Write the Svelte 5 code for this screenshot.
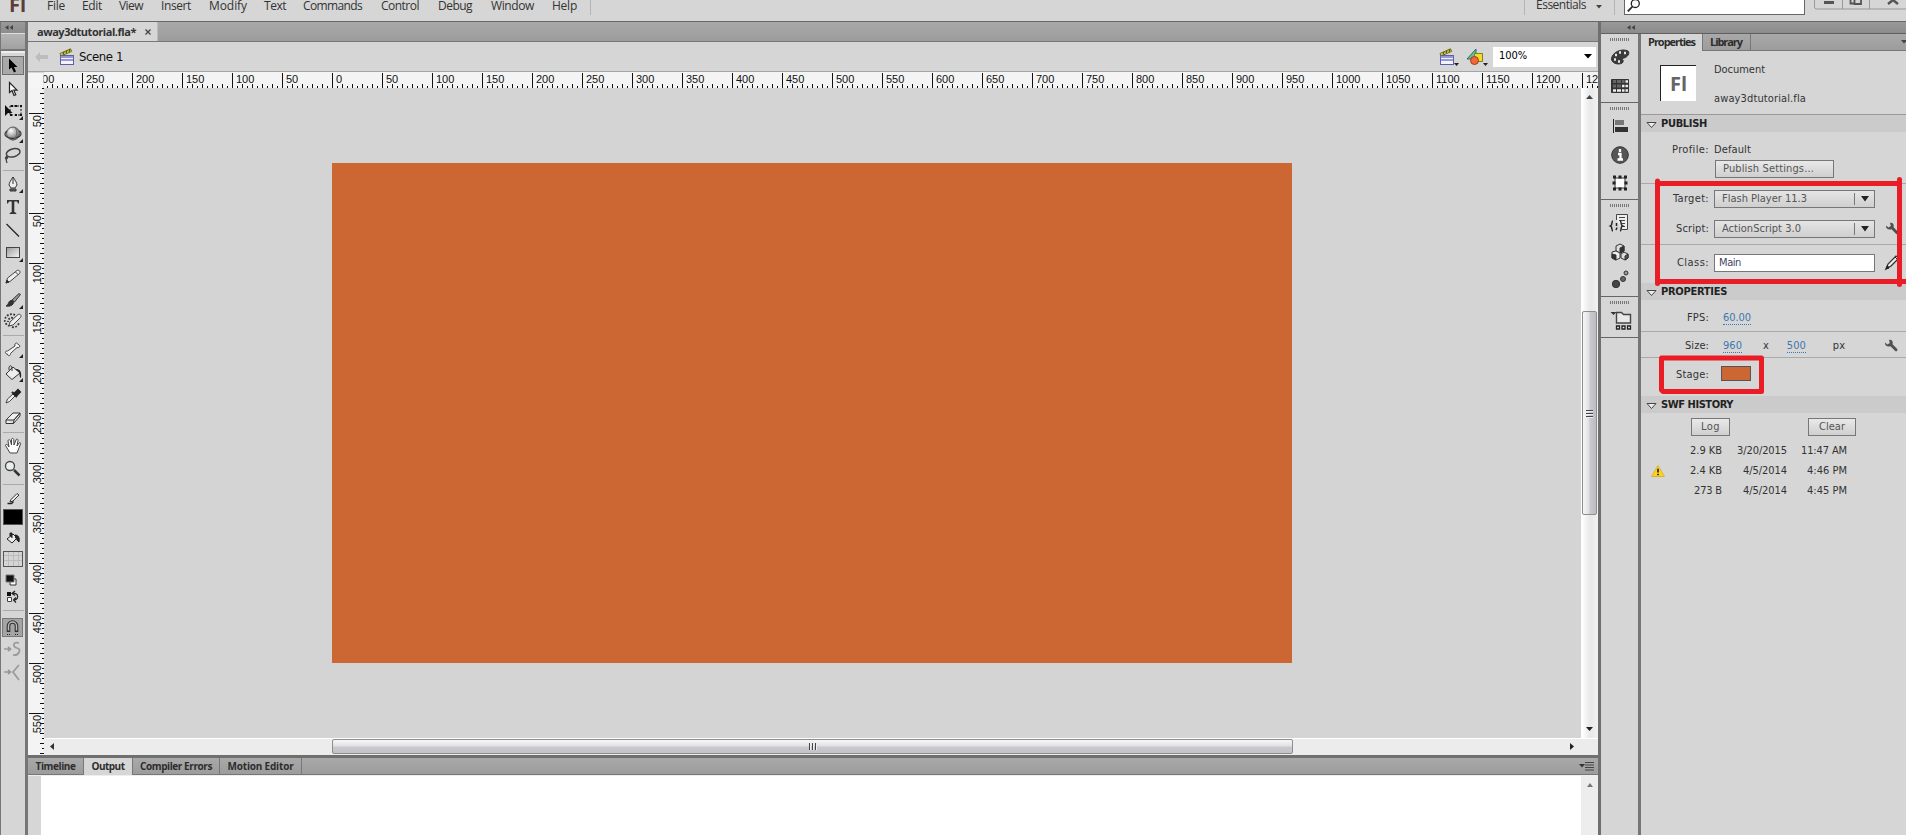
<script>
  function fit(node, width) {
    const natural = node.getBoundingClientRect().width;
    node.style.letterSpacing = (width - natural) / node.textContent.length + 'px';
  }

  const menus = [
    ['File', 47, 18], ['Edit', 82, 20], ['View', 119, 24], ['Insert', 161, 30],
    ['Modify', 209, 38], ['Text', 264, 22], ['Commands', 303, 59], ['Control', 381, 38],
    ['Debug', 438, 34], ['Window', 491, 43], ['Help', 552, 25]
  ].map(([name, x, w], i, all) => ({ name, w, gap: x - (i ? all[i - 1][1] + all[i - 1][2] : 25) }));

  const tools = [
    ['select', 24], ['subselect', 22], ['transform', 24], ['rotate3d', 22], ['lasso', 22], ['sep', 7],
    ['pen', 20], ['text', 26], ['line', 22], ['rect', 22], ['pencil', 25], ['brush', 21], ['deco', 22], ['sep', 7],
    ['bone', 20], ['bucket', 27], ['dropper', 19], ['eraser', 25], ['sep', 4],
    ['hand', 24], ['zoom', 22], ['sep', 9],
    ['stroke', 17], ['black', 21], ['fill', 21], ['grid', 21], ['bw', 21], ['swap', 15], ['sep', 10],
    ['magnet', 25], ['smooth', 18], ['straighten', 28]
  ];
  const flyouts = ['transform', 'rotate3d', 'pen', 'rect', 'brush', 'bone', 'bucket'];

  const hTicks = [];
  for (let v = -285; v <= 1265; v += 5) hTicks.push(v);
  const vTicks = [];
  for (let v = -75; v <= 590; v += 5) vTicks.push(v);
  const hLabels = [];
  for (let v = -300; v <= 1250; v += 50) hLabels.push(v);
  const vLabels = [];
  for (let v = -50; v <= 550; v += 50) vLabels.push(v);

  const dock = [
    [['palette', 32], ['swatches', 26]],
    [['align', 30], ['info', 28], ['bounds', 28]],
    [['snippets', 31], ['cubes', 28], ['motion', 28]],
    [['project', 31]]
  ];
  const bottomTabs = [['Timeline', 40, 56], ['Output', 33, 49], ['Compiler Errors', 72, 87], ['Motion Editor', 66, 82]];
  const history = [
    ['', '2.9 KB', 32, '3/20/2015', 50, '11:47 AM', 46],
    ['!', '2.4 KB', 32, '4/5/2014', 44, '4:46 PM', 40],
    ['', '273 B', 28, '4/5/2014', 44, '4:45 PM', 40]
  ];
</script>

{#snippet sceneIcon()}
  <svg width="16" height="18" viewBox="0 0 16 18">
    <path d="M1 5.500 11.500.8l1.200 2.600L2 8z" fill="#d9d94a" stroke="#6f6d18" />
    <path d="M4 6.500 5 4M7 5 8 2.500M10 3.800 11 1.300" stroke="#55540f" stroke-width="1.200" />
    <rect x="1.500" y="7.500" width="13" height="9" fill="#f3f3ff" stroke="#5d5fa8" />
    <path d="M1.500 9h13M2 12h12" stroke="#7a7cc4" stroke-width="1.600" />
  </svg>
{/snippet}

{#snippet wrench()}
  <svg width="14" height="14" viewBox="0 0 14 14">
    <path d="M1 3.500 3.500 5.500 5.800 4 5 .8C8 .4 9.300 2.600 8.600 5.200L13.200 10c1 1.200-.8 3.200-2 2L6.500 7.200C3.500 8.200.6 6.600 1 3.500z" fill="#505050" />
  </svg>
{/snippet}

{#snippet grip()}
  <div class="grip"></div>
{/snippet}

<div class="app">
  <header class="menubar">
    <span class="logo">Fl</span>
    {#each menus as m}
      <span class="menu" use:fit={m.w} style:margin-left="{m.gap}px">{m.name}</span>
    {/each}
    <i class="vsep first"></i>
    <span class="grow"></span>
    <i class="vsep"></i>
    <span class="menu essentials" use:fit={50}>Essentials</span>
    <svg class="ess-caret" width="6" height="4"><path d="M0 0h6L3 3.500z" fill="#444" /></svg>
    <i class="vsep second"></i>
    <div class="search">
      <svg width="14" height="14" viewBox="0 0 14 14" fill="none" stroke="#222" stroke-width="1.300"><circle cx="8.300" cy="4.500" r="4" /><path d="M5.500 7.500.8 12.400" stroke-width="1.800" /></svg>
    </div>
    <svg class="winbtns" width="92" height="12" viewBox="0 0 92 12" fill="none" stroke="#999">
      <path d="M.5 0v7q0 2 2 2H92M28.500 0v9M55.500 0v9" />
      <path d="M10 2.500h10" stroke="#555" stroke-width="3" />
      <path d="M41 3.500h-4.500V0M40.500-2v6h6.500V0" stroke="#555" stroke-width="1.800" />
      <path d="m74 4 5-4 5 4" stroke="#555" stroke-width="2.400" />
    </svg>
  </header>

  <div class="body">
    <aside class="toolbar">
      <div class="collapse"><svg width="8" height="6"><path d="M3.500 0v5L0 2.500zM8 0v5L4.500 2.500z" fill="#444" /></svg></div>
      <div class="toolhead"></div>
      <div class="tools">
        {#each tools as [name, h]}
          {#if name === 'sep'}
            <div class="tsep" style:height="{h}px"><i></i></div>
          {:else}
            <div class="tool" style:height="{h}px">
              <svg width="24" height="24" viewBox="-12 -12 24 24" fill="none" stroke="#333" stroke-width="1">
                {#if name === 'select'}
                  <rect x="-10.500" y="-8.500" width="21" height="18" fill="#a9a9a9" stroke="#6e6e6e" />
                  <path d="M-4-6.500v11l2.500-2 2.500 5 2-1-2-4.500H4.500z" fill="#000" stroke="none" />
                {:else if name === 'subselect'}
                  <path d="M-3.500-5.500v10l2.500-2 2 5 1.800-.8-2-4.500H4z" fill="#fff" stroke="#222" stroke-width="1.200" />
                {:else if name === 'transform'}
                  <rect x="-3" y="-5" width="11" height="9" stroke="#111" stroke-dasharray="2 1.500" />
                  <path d="M-8-6V5l3-3H-.5z" fill="#111" stroke="none" />
                  <path d="M-2-6h2v2h-2zM7-6h2v2H7zM7 3h2v2H7zM-3 3h2v2h-2zM2-6h2v2H2zM2 3h2v2H2z" fill="#111" stroke="none" />
                {:else if name === 'rotate3d'}
                  <circle cx="0" cy="-.5" r="6.500" fill="url(#ball)" stroke="#555" />
                  <path d="M-6-3C-9-1-8.500 1.500-6 3 0 6 8 3 8 0 8-2 7-3 6-3" stroke="#333" stroke-width="1.200" />
                  <path d="M2-6.500C5-3 4 3 0 6.500" stroke="#666" />
                {:else if name === 'lasso'}
                  <ellipse cx="1" cy="-3" rx="7" ry="4" transform="rotate(-15)" stroke="#444" stroke-width="1.500" />
                  <path d="M-5.500 0c-4 2-1 4 0 2s-3-3-.5 5" stroke="#444" stroke-width="1.300" />
                {:else if name === 'pen'}
                  <path d="M0-7c2 3 4 6 4 8L2 4h-4L-4 1c0-2 2-5 4-8z" fill="#eee" stroke="#333" />
                  <path d="M0-7v7M-3 5h6v2h-6z" fill="#666" stroke="#333" />
                {:else if name === 'text'}
                  <path d="M-6-7H6v3.500H5L4-5.500H1.300V5l2 1v1h-6.600V6l2-1V-5.500H-4L-5-3.500h-1z" fill="#333" stroke="none" />
                {:else if name === 'line'}
                  <path d="M-6.500-7 6 5.500" stroke="#222" stroke-width="1.300" />
                {:else if name === 'rect'}
                  <rect x="-6.500" y="-5.500" width="13" height="10" fill="url(#metal)" stroke="#444" />
                {:else if name === 'pencil'}
                  <path d="M-7 6-5.500 1 4-6.500c2-1 4 1 2.500 3L-3 4.500zM2.500-5l3 3" fill="#eee" stroke="#444" /><path d="m-7 6 1-3 2 2z" fill="#222" />
                {:else if name === 'brush'}
                  <path d="M-1 0 6-6.500l1.500 1L1.500 2z" fill="#999" stroke="#333" /><path d="M-7 6c3-1 2-5 5-5.500s3 2 2 3.500c-1.500 2-4 2.500-7 2z" fill="#333" />
                {:else if name === 'deco'}
                  <path d="M-4 5-3 1 5-6.500c2-1 4 1 2.500 3L0 4z" fill="#eee" stroke="#444" />
                  <path d="M2-6c-4-2-9 0-10 4s2 6 4 7M0-3c-3-1-5 1-5 4M-1 6c3 1 6-1 7-4" stroke="#333" stroke-width="1.800" stroke-dasharray="1.800 1.500" />
                {:else if name === 'bone'}
                  <path d="M-2.500 4.500c.5 2.500-3 3-3 .5-3 0-2.500-3.500 0-3L2-3C1-5.500 4-7.500 5-4.500c3 .5 2 4-1 3z" fill="#f4f4f4" stroke="#444" />
                {:else if name === 'bucket'}
                  <path d="M-7 1 0-6 7 0-1 6.500z" fill="#eee" stroke="#333" /><path d="M-1-2v-3c0-3-3-3-3 0v2" stroke="#333" />
                  <path d="M2-4c4 0 7 1 6 9-2-1-1-4-2-6z" fill="#222" stroke="none" />
                {:else if name === 'dropper'}
                  <path d="m-7 7 1.500-4L0-2l2 2-5.500 5.500z" fill="#eee" stroke="#444" /><path d="m-1-4 5 5M1-2l4-4 2 2-4 4z" fill="#222" stroke="#222" stroke-width="2" />
                {:else if name === 'eraser'}
                  <path d="M-7 2 0-5h7L1 2zM-7 2v3.500h7.500L1 2l6-7v3L.5 5.500" fill="#f0f0f0" stroke="#333" />
                {:else if name === 'hand'}
                  <path d="M-3 7-7.500-.5c0-1.500 2-1.500 2.500 0l1 1.500L-5-5c0-1.500 2-2 2.500 0L-1.500-1-1.500-6.500c0-1.500 2-1.500 2.300 0L1-1 3-6c.5-1.500 2.300-1 2 .5L4 0 6-3c1-1 2 0 1.500 1L4 7z" fill="#fff" stroke="#444" />
                {:else if name === 'zoom'}
                  <circle cx="-3" cy="-3" r="4.500" fill="#e9eef0" stroke="#444" stroke-width="1.300" /><path d="m1 1 5.500 5.500" stroke="#333" stroke-width="2.500" />
                {:else if name === 'stroke'}
                  <path d="m-3 4 1-2.500 6-6L6-3 0 3z" fill="#eee" stroke="#333" /><path d="M-5.500 5.500h4l2-2" stroke="#222" stroke-width="1.500" />
                {:else if name === 'black'}
                  <rect x="-9.500" y="-7.500" width="19" height="15" fill="#000" stroke="#555" />
                {:else if name === 'fill'}
                  <path d="M-6 1 0-4l4 4-5 5z" fill="#eee" stroke="#222" /><path d="M-1 0v-5h-2v3M2-3c3 0 5 2 4 7-2-1-2-3-4-5" fill="#222" stroke="#222" />
                {:else if name === 'grid'}
                  <rect x="-9.500" y="-7.500" width="19" height="15" fill="#d4d4d4" stroke="#555" /><path d="M-4.500-7V7M.5-7V7M5.500-7V7M-9-3.500H9M-9 1.500H9" stroke="#bbb" />
                {:else if name === 'bw'}
                  <path d="M-3-1h6v6h-6z" fill="#fff" stroke="#333" /><path d="M-7-5H1v7h-8z" fill="#111" stroke="#777" />
                {:else if name === 'swap'}
                  <path d="M-6-6h4v4h-4z" fill="#111" stroke="none" /><path d="M-5.500-.500h4v4h-4z" fill="#fff" stroke="#444" /><path d="M0-4.500c6-1 6 6 1 6.500M2-7-1-4.500 2-2.500M3-.500.500 2 3 4.500" stroke="#222" stroke-width="1.200" />
                {:else if name === 'magnet'}
                  <rect x="-10.500" y="-9.500" width="20" height="18" fill="#a4a4a4" stroke="#777" />
                  <path d="M-4.500 4v-6a4 4 0 0 1 8 0v6" stroke="#333" stroke-width="3.600" /><path d="M-4.500 2.500v-4.500a4 4 0 0 1 8 0v4.500" stroke="#bbb" stroke-width="1.400" />
                  <path d="M-6 6.500h4M2 6.500h4" stroke="#222" stroke-dasharray="1 1" />
                {:else if name === 'smooth'}
                  <path d="M-9 0h6M-5-2l2.500 2L-5 2M6-6C0-8-1-2 4-1s2 8-4 7" stroke="#999" stroke-width="1.700" />
                {:else if name === 'straighten'}
                  <path d="M-9 0h6M-5-2l2.500 2L-5 2M6-7 0 0l6 8" stroke="#999" stroke-width="1.700" />
                {/if}
                {#if flyouts.includes(name)}<path d="M10 5v4H6z" fill="#222" stroke="none" />{/if}
              </svg>
            </div>
          {/if}
        {/each}
      </div>
    </aside>

    <main class="doc">
      <div class="tabrow">
        <div class="doctab"><span use:fit={99}>away3dtutorial.fla*</span><svg width="6" height="6"><path d="m.5.5 5 5m0-5-5 5" stroke="#444" stroke-width="1.300" /></svg></div>
      </div>
      <div class="editbar">
        <svg class="back" width="13" height="10"><path d="M0 5 5 0v3h8v4H5v3z" fill="#bdbdbd" /></svg>
        {@render sceneIcon()}
        <span class="scene" use:fit={44}>Scene 1</span>
        <span class="grow"></span>
        {@render sceneIcon()}
        <svg class="dd" width="5" height="4"><path d="M0 0h5L2.500 3z" fill="#222" /></svg>
        <svg class="shapes" width="18" height="18" viewBox="0 0 18 18"><path d="M1 11 10 1v10z" fill="#5fc09a" stroke="#2d6e66" /><path d="M8.500 5.500h8v8h-8z" fill="#e8e02c" stroke="#857e1b" /><circle cx="8.500" cy="12.500" r="4" fill="#ef6a3a" stroke="#a43b1d" /></svg>
        <svg class="dd" width="5" height="4"><path d="M0 0h5L2.500 3z" fill="#222" /></svg>
        <div class="zoombox"><span use:fit={28}>100%</span><svg width="8" height="5"><path d="M0 0h8L4 4.500z" fill="#000" /></svg></div>
      </div>
      <svg class="hruler" width="1570" height="16" viewBox="28 72 1570 16">
        <rect x="44" y="72" width="1554" height="16" fill="#f4f4f4" />
        <g class="rlabel">
          {#each hLabels as v}<text x={336 + v} y="83">{Math.abs(v)}</text>{/each}
        </g>
        <rect x="28" y="73" width="15.500" height="15" fill="#f6f6f6" />
        {#each hTicks as v}
          {@const h = v % 50 === 0 ? 15 : v % 10 === 0 ? 4 : 2}
          <rect x={332 + v} y={88 - h} width="1" height={h} fill="#111" />
        {/each}
      </svg>
      <div class="work">
        <svg class="vruler" width="16" height="667" viewBox="28 88 16 667">
          <g class="rlabel">
            {#each vLabels as v}<text transform="translate(40.500 {165 + v}) rotate(-90)" text-anchor="end">{Math.abs(v)}</text>{/each}
          </g>
          {#each vTicks as v}
            {@const w = v % 50 === 0 ? 15 : v % 10 === 0 ? 4 : 2}
            <rect x={44 - w} y={163 + v} width={w} height="1" fill="#111" />
          {/each}
        </svg>
        <div class="view">
          <div class="canvasrow">
            <div class="canvas"><div class="stage"></div></div>
            <div class="vscroll">
              <svg width="7" height="4"><path d="M0 4h7L3.500 0z" fill="#444" /></svg>
              <div class="vthumb"><i></i><i></i><i></i></div>
              <svg width="7" height="4"><path d="M0 0h7L3.500 4z" fill="#222" /></svg>
            </div>
          </div>
          <div class="hscroll">
            <svg width="4" height="7"><path d="M4 0v7L0 3.500z" fill="#333" /></svg>
            <div class="hthumb"><i></i><i></i><i></i></div>
            <svg class="ra" width="4" height="7"><path d="M0 0v7l4-3.500z" fill="#222" /></svg>
          </div>
        </div>
      </div>
      <div class="split"></div>
      <div class="btabs">
        {#each bottomTabs as [name, w, box], i}
          <div class="btab" class:on={i === 1} style:width="{box}px"><span use:fit={w}>{name}</span></div>
        {/each}
        <span class="grow"></span>
        <svg width="15" height="9"><path d="M0 2h6L3 5.500z" fill="#333" /><path d="M6 .500h9M6 3h9M6 5.500h9M6 8h9" stroke="#444" /></svg>
      </div>
      <div class="output">
        <div class="gutter"></div><div class="paper"></div>
        <div class="oscroll"><svg width="6" height="4"><path d="M0 4h6L3 0z" fill="#777" /></svg></div>
      </div>
    </main>

    <div class="right">
      <div class="collapse wide"><svg width="8" height="6"><path d="M3.500 0v5L0 2.500zM8 0v5L4.500 2.500z" fill="#444" /></svg></div>
      <div class="rcols">
        <div class="dock">
          {#each dock as group}
            <div class="group">
              {@render grip()}
              {#each group as [name, h]}
                <div class="tool" style:height="{h}px">
                  <svg width="24" height="24" viewBox="-12 -12 24 24" fill="none" stroke="#333" stroke-width="1">
                    {#if name === 'palette'}
                      <path d="M8-6C2-9-8-5-8.500 2-8 8 2 8 3 5S0 2 4 1s6-5 4-7z" fill="#3b3b3b" />
                      <path d="M-5-2h2M-1-4.500h2M4-4h2M-6 2.500h2M-2 4.500h2" stroke="#e6e6e6" stroke-width="2.500" />
                    {:else if name === 'swatches'}
                      <path d="M-8.500-6.500h17v13h-17z" fill="#333" /><path d="M-7-4.500h3M-3-4.500H1M2-4.500h2.500M-7 0h3M-3 0H1" stroke="#666" stroke-width="3" /><path d="M5.500-4.500h2.500M2 0h2.500M5.500 0H8M-7 4.500h3M-3 4.500H1M2 4.500h2.500M5.500 4.500H8" stroke="#eee" stroke-width="2.500" />
                    {:else if name === 'align'}
                      <path d="M-6.500-7V7" stroke="#222" /><path d="M-5-6h9v5h-9z" fill="#777" stroke="none" /><path d="M-5 1H8v5H-5z" fill="#333" stroke="none" />
                    {:else if name === 'info'}
                      <circle cx="0" cy="0" r="8.300" fill="#555" stroke="#333" /><path d="M0-6v3M-2-1h2.500v5M-2.500 4.500h5.500" stroke="#fff" stroke-width="2.300" />
                    {:else if name === 'bounds'}
                      <rect x="-5" y="-5" width="10" height="10" fill="#fff" /><path d="M-7-6h3M-1.500-6h3M4-6h3M-7 6h3M-1.500 6h3M4 6h3M-6-1.500v3M6-1.500v3" stroke="#222" stroke-width="3" />
                    {:else if name === 'snippets'}
                      <path d="M-3.500-3V-8.500H7.500V6.500H2" fill="#eee" stroke="#444" /><path d="M-1-5.500h6M-1-2.500h6M2 .5h3M3 3.500h2" stroke="#444" /><path d="M-7-2c-2 0 0 4-2.500 5C-7 4-9 8-7 8M0-2c2 0 0 4 2.500 5C0 4 2 8 0 8M-3.500 0v3M-3 4.500-4 7" stroke="#222" stroke-width="1.500" />
                    {:else if name === 'cubes'}
                      <path d="m-4-6 4-2 4 2v5l-4 2-4-2z" fill="#ddd" /><path d="m0-4 4-2v5L0 1z" fill="#333" /><path d="m-8 0 4-1 4 2v5l-4 2-4-2z" fill="#eee" /><path d="M-8 2v4l4 2V3z" fill="#333" /><path d="m1 2 3-2 4 2v4L5 8 1 6z" fill="#ddd" /><path d="m5 4 3-2v4L5 8z" fill="#555" />
                    {:else if name === 'motion'}
                      <circle cx="-4" cy="4" r="3.700" fill="#444" /><circle cx="3" cy="-1" r="2.500" fill="#666" /><circle cx="6" cy="-7" r="2" fill="#999" />
                    {:else}
                      <path d="M-9.500-8h6L-6.500-5z" fill="#333" stroke="none" /><path d="M-3.500 3V-7.500h5l2 2h7V3z" fill="#e8e8e8" stroke="#444" stroke-width="1.400" /><path d="M-3.500 6h3v3h-3zM2 6h3v3H2zM7.500 6h3v3h-3z" fill="#eee" stroke="#222" stroke-width="1.300" />
                    {/if}
                  </svg>
                </div>
              {/each}
            </div>
          {/each}
        </div>
        <div class="vdiv"></div>
        <section class="props">
          <div class="ptabs">
            <div class="ptab on"><span use:fit={47}>Properties</span></div>
            <div class="ptab lib"><span use:fit={32}>Library</span></div>
            <span class="grow"></span>
            <svg width="5" height="4"><path d="M0 0h6L3 3.500z" fill="#444" /></svg>
          </div>
          <div class="dochead">
            <div class="flicon"><span>Fl</span></div>
            <div class="names"><span use:fit={51}>Document</span><span use:fit={92}>away3dtutorial.fla</span></div>
          </div>
          <div class="sect"><svg width="11" height="7"><path d="M1 .5h9L5.500 5.500z" fill="#eee" stroke="#444" /></svg><b use:fit={46}>PUBLISH</b></div>
          <div class="row profile"><label use:fit={37}>Profile:</label><span use:fit={37}>Default</span></div>
          <div class="btnrow"><button class="pubset"><span use:fit={91}>Publish Settings...</span></button></div>
          <div class="row line target"><label use:fit={36}>Target:</label><div class="sel"><span use:fit={85}>Flash Player 11.3</span><i></i><svg width="8" height="6"><path d="M0 0h8L4 5.500z" fill="#222" /></svg></div></div>
          <div class="row script"><label use:fit={33}>Script:</label><div class="sel"><span use:fit={79}>ActionScript 3.0</span><i></i><svg width="8" height="6"><path d="M0 0h8L4 5.500z" fill="#222" /></svg></div><div class="end">{@render wrench()}</div></div>
          <div class="row line class"><label use:fit={32}>Class:</label><div class="input"><span use:fit={22}>Main</span></div>
            <div class="end"><svg width="15" height="15"><path d="M1 14 3 9 11 1l3 2-8 8z" fill="#eee" stroke="#333" stroke-width="1.300" /><path d="m1 14 1.500-3.500L4 13zM10 2l3 3" fill="#222" stroke="#222" /></svg></div></div>
          <div class="sect"><svg width="11" height="7"><path d="M1 .5h9L5.500 5.500z" fill="#eee" stroke="#444" /></svg><b use:fit={66}>PROPERTIES</b></div>
          <div class="row fps"><label use:fit={22}>FPS:</label><span class="hot" use:fit={28}>60.00</span></div>
          <div class="row line size"><label use:fit={24}>Size:</label><span class="hot" use:fit={19}>960</span><span class="x">x</span><span class="hot" use:fit={19}>500</span><span class="px">px</span><div class="end">{@render wrench()}</div></div>
          <div class="row line stagerow"><label use:fit={33}>Stage:</label><div class="swatch"></div></div>
          <div class="sect"><svg width="11" height="7"><path d="M1 .5h9L5.500 5.500z" fill="#eee" stroke="#444" /></svg><b use:fit={72}>SWF HISTORY</b></div>
          <div class="hbtns"><button class="log"><span use:fit={19}>Log</span></button><button class="clear"><span use:fit={26}>Clear</span></button></div>
          {#each history as [warn, size, sw, date, dw, time, tw]}
            <div class="hist">
              <div>{#if warn}<svg width="14" height="12" viewBox="0 0 15 13"><path d="M7.500.5 14.500 12.500H.5z" fill="#ffd21c" stroke="#d9b02a" /><path d="M7.500 4v4M7.500 9.500v1.500" stroke="#222" stroke-width="1.800" /></svg>{/if}</div>
              <span><em use:fit={sw}>{size}</em></span><span><em use:fit={dw}>{date}</em></span><span><em use:fit={tw}>{time}</em></span>
            </div>
          {/each}
          <svg class="marks" width="265" height="230" viewBox="1641 170 265 230" fill="none" stroke="#ea1c26" stroke-width="5" stroke-linecap="round">
            <path d="M1657.500 181V283.500M1657.500 183.500H1899M1899.500 179.500V284.500M1657.500 281.500H1906" />
            <path d="M1661.500 358H1761.500V391.500H1663L1661.500 390Z" stroke-linejoin="round" />
          </svg>
        </section>
      </div>
    </div>
  </div>
  <svg width="0" height="0" class="defs"><defs>
    <radialGradient id="ball" cx=".35" cy=".3" r=".8"><stop offset="0" stop-color="#fff" /><stop offset="1" stop-color="#555" /></radialGradient>
    <linearGradient id="metal" x2="1" y2="1"><stop offset="0" stop-color="#999" /><stop offset="1" stop-color="#f6f6f6" /></linearGradient>
  </defs></svg>
</div>

<style>
  :global(body) { margin: 0; overflow: hidden; }
  .app { width: 1906px; height: 835px; display: flex; flex-direction: column; overflow: hidden; background: #d6d6d6; color: #333; font: 11px/14px "DejaVu Sans Condensed", "DejaVu Sans", sans-serif; font-stretch: condensed; }
  .app *, .app { box-sizing: border-box; }
  svg { display: block; flex: none; overflow: visible; }
  span, b, em, label { white-space: nowrap; font-style: normal; }
  .grow { flex: 1; }
  .defs { position: absolute; }

  .menubar { height: 22px; display: flex; align-items: flex-start; border-bottom: 1px solid #686868; flex: none; }
  .logo { width: 16px; margin: 0 0 0 9px; font: bold 20px/10px "Open Sans", sans-serif; color: #5d3b3a; letter-spacing: 0; }
  .menu { font: 12px/12px "Open Sans", sans-serif; color: #333; flex: none; }
  .vsep { width: 1px; height: 15px; background: #b4b4b4; }
  .vsep.first { margin-left: 13px; }
  .essentials { margin-left: 11px; line-height: 10px; }
  .ess-caret { margin: 5px 0 0 10px; }
  .vsep.second { margin-left: 12px; }
  .search { width: 181px; height: 15px; margin-left: 9px; background: #fff; border: 1px solid #666; border-top: 0; padding-left: 2px; }
  .search svg { margin-top: -1px; }
  .winbtns { margin-left: 9px; overflow: hidden; }

  .body { flex: 1; display: flex; min-height: 0; }
  .toolbar { width: 28px; flex: none; border-left: 1px solid #777; border-right: 3px solid #767676; display: flex; flex-direction: column; }
  .collapse { height: 11px; flex: none; background: linear-gradient(#999, #8c8c8c); padding: 3px 0 0 4px; }
  .toolhead { height: 18px; flex: none; border-top: 1px solid #ddd; border-bottom: 2px solid #777; background: linear-gradient(#b4b4b4, #a1a1a1); }
  .tools { border-top: 2px solid #eee; display: flex; flex-direction: column; }
  .tool { display: flex; align-items: center; justify-content: center; flex: none; }
  .tsep { display: flex; align-items: center; flex: none; }
  .tsep i { height: 1px; margin: 0 1px 0 2px; flex: 1; background: #aaa; }

  .doc { width: 1570px; flex: none; display: flex; flex-direction: column; }
  .tabrow { height: 20px; flex: none; background: linear-gradient(#a9a9a9, #9c9c9c); border-bottom: 1px solid #777; }
  .doctab { width: 130px; height: 19px; background: #d6d6d6; border-right: 1px solid #bbb; display: flex; align-items: center; padding-left: 9px; font: bold 11px/16px "Open Sans", sans-serif; gap: 9px; }
  .editbar { height: 30px; flex: none; display: flex; align-items: center; padding: 0 2px 0 7px; border-bottom: 1px solid #a5a5a5; }
  .back { margin-right: 11px; }
  .scene { margin-left: 4px; font-size: 13px; color: #111; }
  .dd { margin: 16px 4px 0 -1px; }
  .shapes { margin-left: 3px; }
  .zoombox { width: 103px; height: 20px; background: #fff; display: flex; align-items: center; justify-content: space-between; padding: 0 4px 1px 6px; margin-left: 1px; color: #000; }
  .hruler, .vruler { overflow: hidden; }
  .rlabel { font: 11px "Liberation Sans", sans-serif; fill: #111; }
  .work { display: flex; flex: none; }
  .vruler { background: #f4f4f4; }
  .view { width: 1554px; }
  .canvasrow { display: flex; height: 650px; }
  .canvas { width: 1537px; background: #d4d4d4; padding: 75px 0 0 288px; }
  .stage { width: 960px; height: 500px; background: #cc6633; }
  .vscroll { width: 17px; background: linear-gradient(90deg, #fff 1px, #e8e8e8, #f1f1f1); display: flex; flex-direction: column; align-items: center; padding: 7px 0 7px; justify-content: space-between; }
  .vthumb { width: 15px; height: 204px; margin: 212px 0 auto; border: 1px solid #8d8d90; border-radius: 2px; background: linear-gradient(90deg, #f7f7f9, #e0e0e4 45%, #c8c8cd 55%, #bcbcc2); display: flex; flex-direction: column; justify-content: center; align-items: center; gap: 2px; }
  .vthumb i { width: 7px; height: 1px; background: #444; box-shadow: 0 1px #eee; }
  .hscroll { height: 17px; display: flex; align-items: center; background: #ececec; border-top: 1px solid #fff; padding: 0 24px 1px 6px; }
  .hthumb { width: 961px; height: 15px; margin-left: 278px; border: 1px solid #8d8d90; border-radius: 2px; background: linear-gradient(#f6f6f8, #e2e2e5 45%, #c9c9cd 55%, #c3c3c7); display: flex; justify-content: center; align-items: center; gap: 2px; }
  .hthumb i { width: 1px; height: 7px; background: #444; box-shadow: 1px 0 #eee; }
  .ra { margin-left: auto; }
  .split { height: 3px; flex: none; background: #6f6f6f; }
  .btabs { height: 17px; flex: none; background: linear-gradient(#a9a9a9, #9c9c9c); border-bottom: 1px solid #777; display: flex; align-items: center; padding-right: 4px; }
  .btab { height: 16px; border-right: 1px solid #777; display: flex; align-items: center; justify-content: center; font: bold 10px/14px "Open Sans", sans-serif; color: #2d2d2d; }
  .btab.on { height: 17px; background: #d6d6d6; }
  .output { flex: 1; display: flex; border-top: 1px solid #eee; }
  .gutter { width: 13px; }
  .paper { flex: 1; background: #fff; }
  .oscroll { width: 17px; background: #ededed; display: flex; justify-content: center; padding-top: 7px; }

  .right { flex: 1; border-left: 3px solid #6f6f6f; display: flex; flex-direction: column; min-width: 0; }
  .collapse.wide { padding-left: 26px; }
  .rcols { flex: 1; display: flex; border-top: 1px solid #606060; }
  .dock { width: 37px; flex: none; }
  .group { border-bottom: 1px solid #666; padding: 4px 0 1px 1px; }
  .group:first-child { height: 69px; }
  .group:nth-child(2) { height: 97px; }
  .group:nth-child(3) { height: 97px; }
  .group:nth-child(4) { height: 41px; }
  .grip { width: 20px; height: 3px; margin: 0 auto; background: repeating-linear-gradient(90deg, #777 0 1px, transparent 1px 2px); }
  .group:nth-child(2) .grip { margin-bottom: 1px; }
  .vdiv { width: 3px; flex: none; background: #767676; }
  .props { flex: 1; min-width: 0; position: relative; display: flex; flex-direction: column; }
  .ptabs { height: 17px; flex: none; display: flex; align-items: center; background: linear-gradient(#a9a9a9, #9c9c9c); border-bottom: 1px solid #777; }
  .ptab { height: 16px; padding-left: 7px; border-right: 1px solid #777; font: bold 11px/16px "Open Sans", sans-serif; color: #2d2d2d; }
  .ptab.on { width: 62px; background: #d6d6d6; height: 17px; }
  .lib { width: 48px; }
  .dochead { height: 64px; flex: none; display: flex; border-bottom: 1px solid #999; padding: 14px 0 0 19px; }
  .flicon { width: 36px; height: 36px; background: #fff; border: 1px solid #222; border-right: 0; border-bottom: 0; display: flex; align-items: center; justify-content: center; font: bold 20px/30px "Open Sans", sans-serif; color: #666; }
  .names { margin: -2px 0 0 18px; display: flex; flex-direction: column; align-items: flex-start; gap: 15px; }
  .sect { height: 17px; flex: none; background: #cbcbcb; display: flex; align-items: center; padding-left: 5px; color: #222; }
  .sect svg { margin: 3px 4px 0 0; }
  .sect b { font: bold 11px/14px "DejaVu Sans Condensed", "DejaVu Sans", sans-serif; font-stretch: condensed; }
  .row { flex: none; display: grid; grid-template-columns: 68px auto auto auto auto; justify-content: start; align-items: center; column-gap: 5px; }
  .row label { justify-self: end; }
  .line { border-top: 1px solid #aaa; }
  .profile { height: 27px; padding-top: 8px; }
  .btnrow { height: 24px; flex: none; padding: 1px 0 0 74px; }
  button { display: flex; align-items: center; justify-content: center; height: 18px; padding: 0; border: 1px solid #777; background: linear-gradient(#e9e9e9, #cfcfcf); color: #555; font: inherit; }
  .pubset { width: 119px; justify-content: flex-start; padding-left: 7px; }
  .target { height: 32px; padding-bottom: 1px; }
  .script { height: 29px; padding-bottom: 2px; }
  .sel { width: 161px; height: 18px; border: 1px solid #777; background: linear-gradient(#e5e5e5, #cfcfcf); color: #555; display: flex; align-items: center; padding: 0 5px 0 7px; }
  .sel i { width: 1px; height: 12px; background: #777; margin: 0 6px 0 auto; }
  .end { justify-self: end; margin-left: 5px; }
  .class { height: 39px; padding-bottom: 3px; }
  .input { width: 161px; height: 18px; border: 1px solid #777; background: #fff; padding-left: 4px; line-height: 16px; color: #446; }
  .fps { height: 31px; padding-top: 5px; }
  .hot { color: #3c78b0; border-bottom: 1px dotted #3c78b0; line-height: 13px; margin-left: 9px; }
  .size { height: 26px; padding-top: 2px; grid-template-columns: 68px auto auto auto auto auto; }
  .size .x { margin-left: 16px; }
  .size .px { margin-left: 22px; }
  .size .x + .hot { margin-left: 13px; }
  .size .end { margin-left: 34px; }
  .stagerow { height: 39px; padding-bottom: 4px; }
  .swatch { width: 30px; height: 15px; margin: -3px 0 0 7px; background: #cc6633; border: 1px solid #555; }
  .hbtns { height: 28px; flex: none; display: flex; padding: 5px 0 0 50px; }
  .log { width: 39px; margin-right: 78px; }
  .clear { width: 48px; }
  .hist { height: 20px; flex: none; display: grid; grid-template-columns: 37px 44px 65px 60px; align-items: center; text-align: right; }
  .hist div { padding: 0 0 1px 10px; }
  .hist span { display: flex; justify-content: flex-end; }
  .marks { position: absolute; left: 0; top: 136px; overflow: hidden; }
</style>
